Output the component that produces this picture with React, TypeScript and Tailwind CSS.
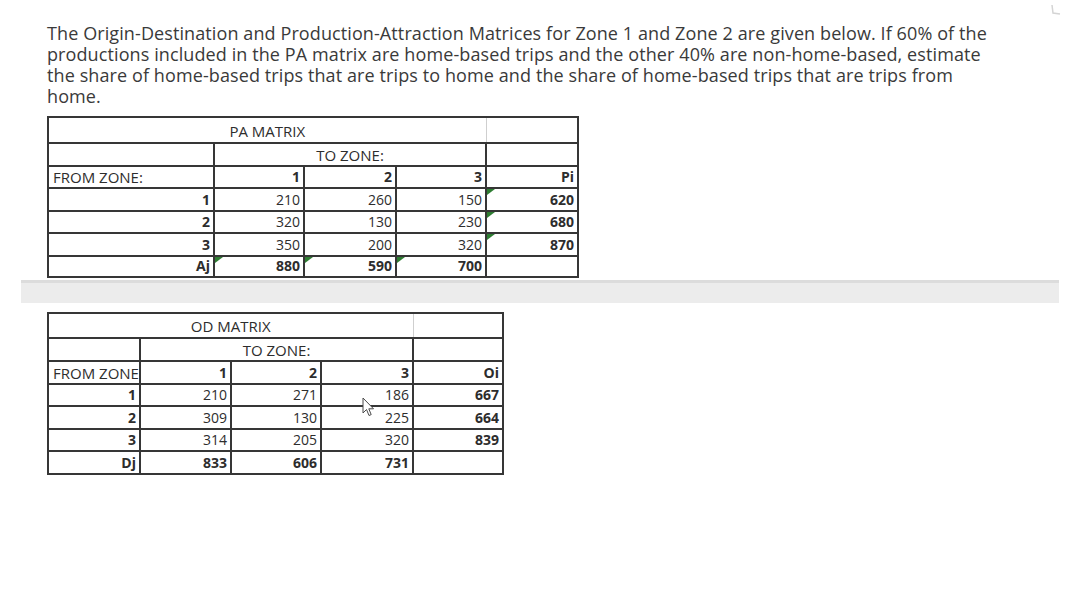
import React from "react";

type Cell = { t?: string; b?: boolean; flag?: boolean };

const txt = "font-['Open_Sans',sans-serif]";
const line = "border-[#363636]";

function Flag() {
  return (
    <svg className="absolute left-0 top-0" width="8" height="6" viewBox="0 0 8 6">
      <polygon points="0,0 8,0 0,6" fill="#2e7d32" />
    </svg>
  );
}

function Row({ cells, h }: { cells: Cell[]; h: number }) {
  return (
    <tr style={{ height: h }}>
      {cells.map((c, i) => (
        <td
          key={i}
          className={`relative border-2 ${line} align-bottom pb-px pr-[3px] text-right leading-[18px] ${c.b ? "font-bold" : ""}`}
        >
          {c.flag && <Flag />}
          {c.t}
        </td>
      ))}
    </tr>
  );
}

function Matrix({
  title,
  widths,
  heights,
  header,
  rows,
  firstLabel,
}: {
  title: string;
  widths: number[];
  heights: number[];
  header: Cell[];
  rows: Cell[][];
  firstLabel: string;
}) {
  const total = widths.reduce((a, b) => a + b, 0);
  return (
    <table
      className={`table-fixed border-collapse ${txt} text-[14px] text-[#2d2d2d]`}
      style={{ width: total }}
    >
      <colgroup>
        {widths.map((w, i) => (
          <col key={i} style={{ width: w }} />
        ))}
      </colgroup>
      <tbody>
        <tr style={{ height: heights[0] }}>
          <td
            colSpan={4}
            className={`border-y-2 border-l-2 border-r ${line} border-r-[#cfcfcf] text-center align-bottom pb-[2px] text-[15px] leading-[18px]`}
          >
            {title}
          </td>
          <td className={`border-y-2 border-r-2 border-l ${line} border-l-[#cfcfcf]`} />
        </tr>
        <tr style={{ height: heights[1] }}>
          <td className={`border-2 ${line}`} />
          <td colSpan={3} className={`border-2 ${line} text-center align-bottom pb-px text-[15px] leading-[18px]`}>
            TO ZONE:
          </td>
          <td className={`border-2 ${line}`} />
        </tr>
        <tr style={{ height: heights[2] }}>
          <td className={`border-2 ${line} align-bottom pb-px pl-[4px] text-[15px] leading-[18px] whitespace-nowrap overflow-hidden`}>
            {firstLabel}
          </td>
          {header.map((c, i) => (
            <td
              key={i}
              className={`border-2 ${line} align-bottom pb-px pr-[3px] text-right font-bold leading-[18px]`}
            >
              {c.t}
            </td>
          ))}
        </tr>
        {rows.map((r, i) => (
          <Row key={i} cells={r} h={heights[3 + i]} />
        ))}
      </tbody>
    </table>
  );
}

export default function App() {
  return (
    <div className="relative w-[1080px] h-[606px] overflow-hidden bg-white">
      {/* corner mark */}
      <svg className="absolute left-[1050px] top-[4px]" width="12" height="12" viewBox="0 0 12 12">
        <path d="M2 1 L3 9 L10 10" stroke="#d4d4d4" strokeWidth="1.5" fill="none" />
      </svg>

      <div className="pt-[23px] pl-[47px]">
        <p className={`${txt} text-[18px] leading-[21px] tracking-[0.1px] text-[#3a3a3a] whitespace-nowrap`}>
          The Origin-Destination and Production-Attraction Matrices for Zone 1 and Zone 2 are given below. If 60% of the
          <br />
          productions included in the PA matrix are home-based trips and the other 40% are non-home-based, estimate
          <br />
          the share of home-based trips that are trips to home and the share of home-based trips that are trips from
          <br />
          home.
        </p>

        <div className="mt-[9px]">
          <Matrix
            title="PA MATRIX"
            firstLabel="FROM ZONE:"
            widths={[166, 90, 92, 90, 92]}
            heights={[26, 23, 22, 23, 22, 23, 21]}
            header={[{ t: "1" }, { t: "2" }, { t: "3" }, { t: "Pi" }]}
            rows={[
              [{ t: "1", b: true }, { t: "210" }, { t: "260" }, { t: "150" }, { t: "620", b: true, flag: true }],
              [{ t: "2", b: true }, { t: "320" }, { t: "130" }, { t: "230" }, { t: "680", b: true, flag: true }],
              [{ t: "3", b: true }, { t: "350" }, { t: "200" }, { t: "320" }, { t: "870", b: true, flag: true }],
              [
                { t: "Aj", b: true },
                { t: "880", b: true, flag: true },
                { t: "590", b: true, flag: true },
                { t: "700", b: true, flag: true },
                {},
              ],
            ]}
          />
        </div>
      </div>

      {/* grey divider band */}
      <div className="ml-[21px] mt-[2px] w-[1038px] h-[23px] bg-[#ececec] border-t-[3px] border-[#dcdcdc]" />

      <div className="relative pl-[47px] mt-[9px]">
        <Matrix
          title="OD MATRIX"
          firstLabel="FROM ZONE"
          widths={[92, 91, 90, 92, 90]}
          heights={[25, 23, 23, 22, 23, 22, 23]}
          header={[{ t: "1" }, { t: "2" }, { t: "3" }, { t: "Oi" }]}
          rows={[
            [{ t: "1", b: true }, { t: "210" }, { t: "271" }, { t: "186" }, { t: "667", b: true }],
            [{ t: "2", b: true }, { t: "309" }, { t: "130" }, { t: "225" }, { t: "664", b: true }],
            [{ t: "3", b: true }, { t: "314" }, { t: "205" }, { t: "320" }, { t: "839", b: true }],
            [{ t: "Dj", b: true }, { t: "833", b: true }, { t: "606", b: true }, { t: "731", b: true }, {}],
          ]}
        />
        {/* mouse pointer */}
        <svg className="absolute left-[362px] top-[85px]" width="14" height="20" viewBox="0 0 14 20">
          <path
            d="M1 1 L1 16 L4.5 12.5 L7 18.5 L9.2 17.6 L6.8 11.8 L11.5 11.8 Z"
            fill="#fff"
            stroke="#4a4a4a"
            strokeWidth="1"
            strokeLinejoin="round"
          />
        </svg>
      </div>
    </div>
  );
}
